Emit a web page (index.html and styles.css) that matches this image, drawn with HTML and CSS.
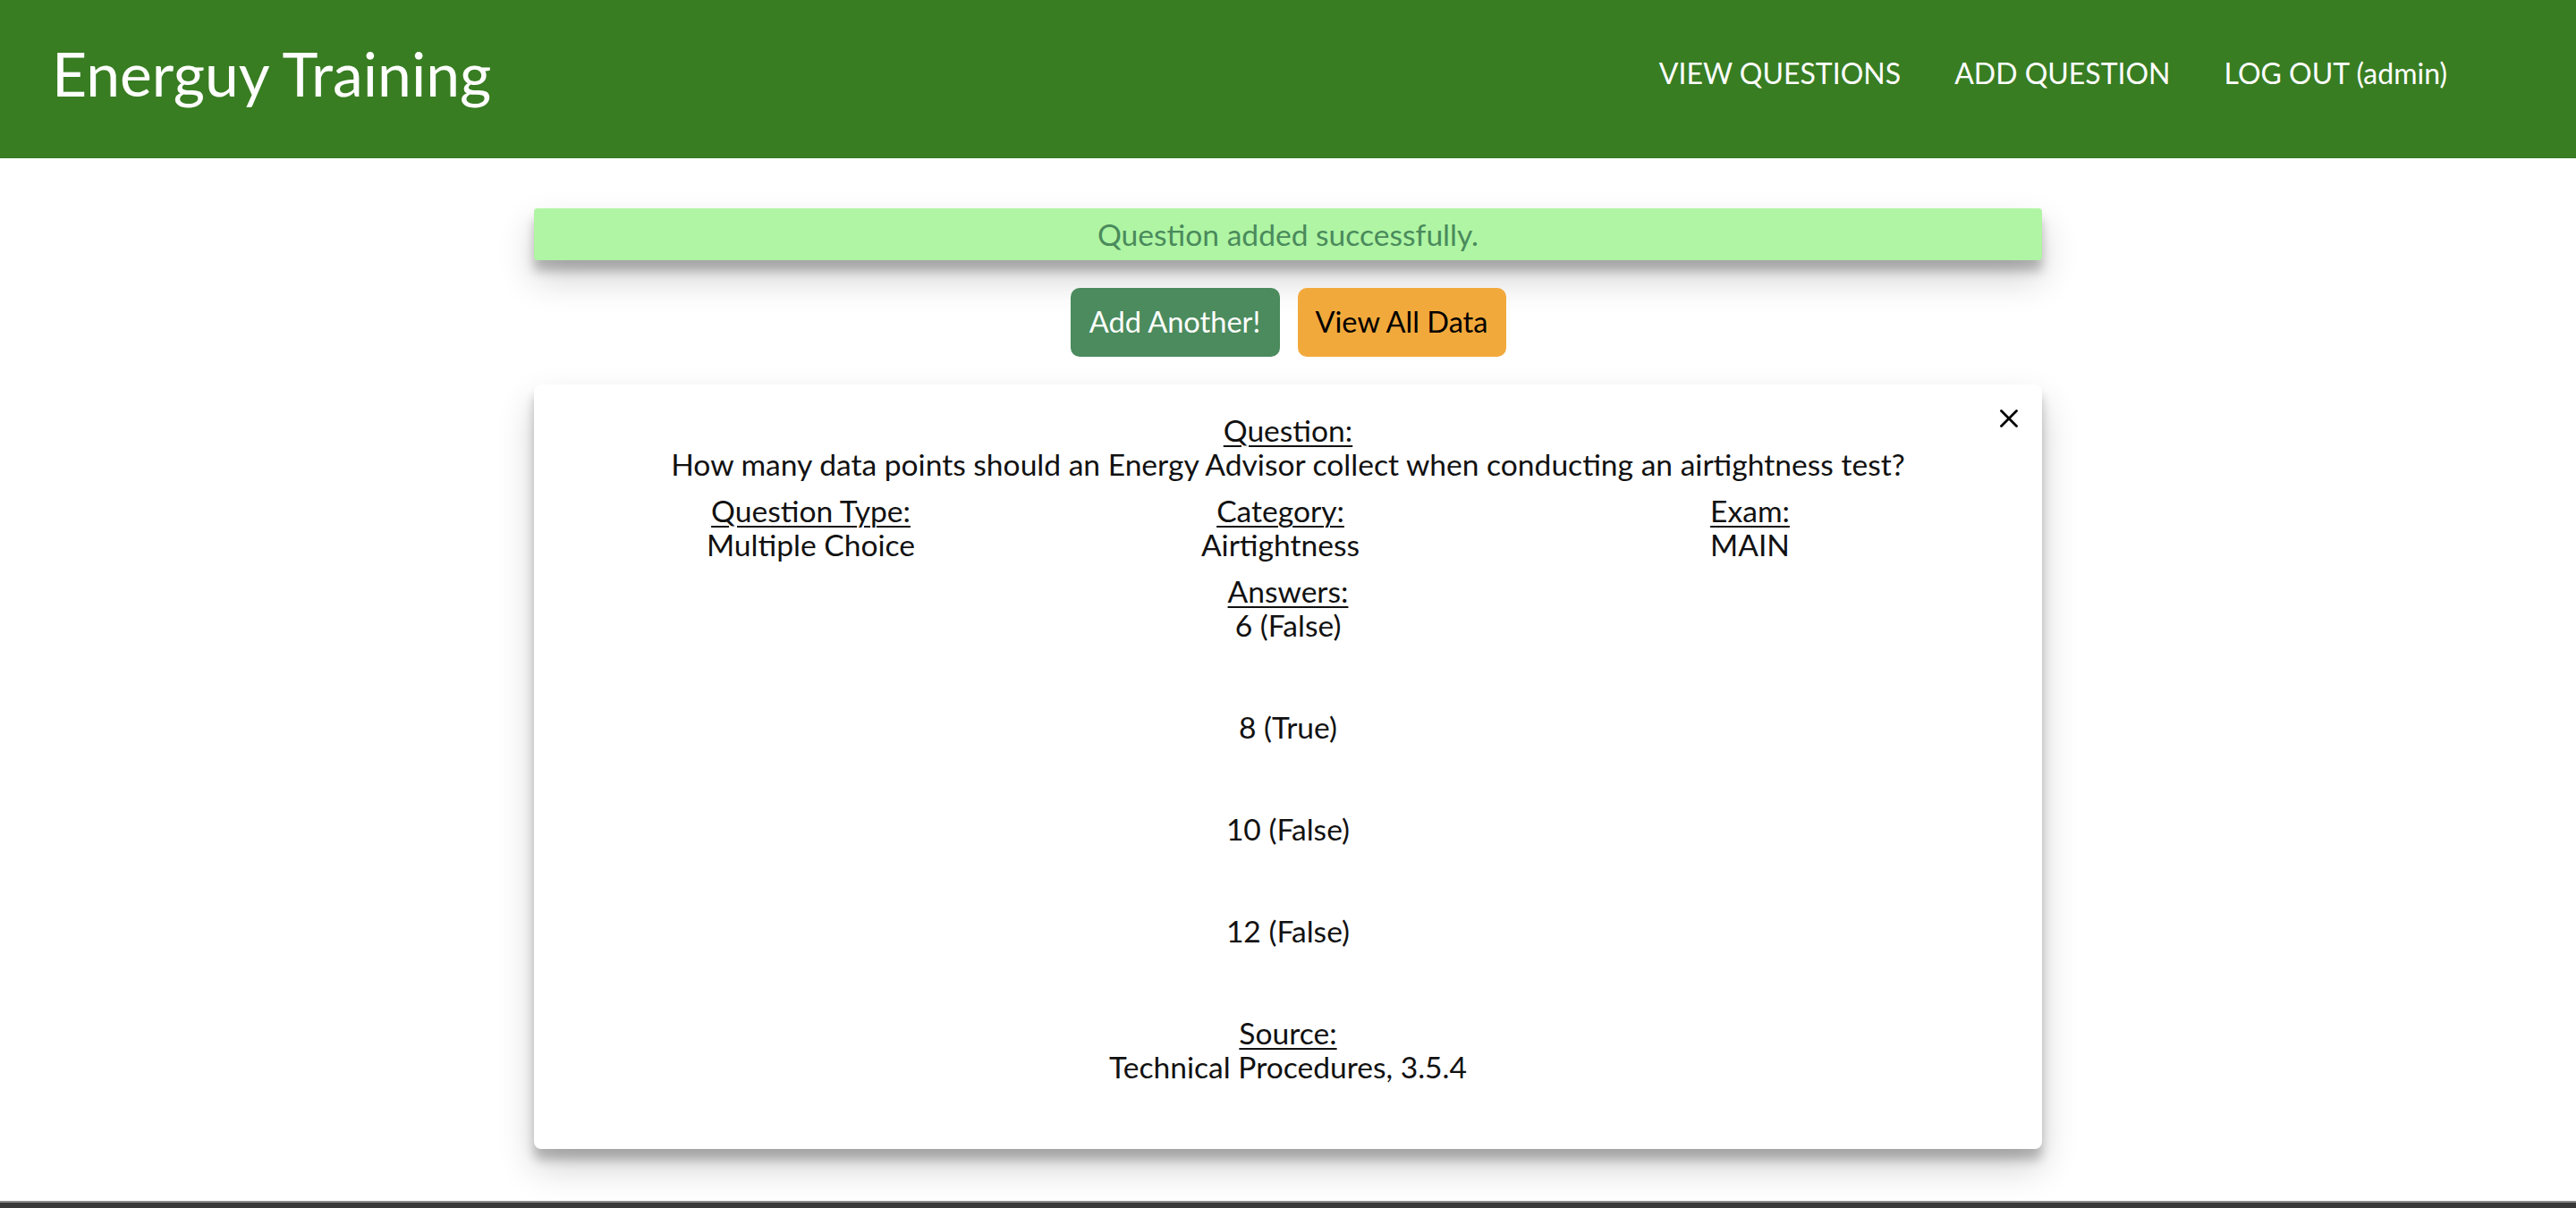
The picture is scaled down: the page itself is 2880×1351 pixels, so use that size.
FILE: index.html
```html
<!DOCTYPE html>
<html lang="en">
<head>
<meta charset="utf-8">
<title>Energuy Training</title>
<link rel="stylesheet" href="styles.css">
</head>
<body>
<header class="topbar">
  <a class="brand" href="#">Energuy Training</a>
  <nav class="nav">
    <a class="nav-link" href="#">VIEW QUESTIONS</a>
    <a class="nav-link" href="#">ADD QUESTION</a>
    <a class="nav-link" href="#">LOG OUT (admin)</a>
  </nav>
</header>

<main class="main">
  <div class="alert">Question added successfully.</div>

  <div class="actions">
    <a class="btn btn-green" href="#">Add Another!</a>
    <a class="btn btn-orange" href="#">View All Data</a>
  </div>

  <section class="card">
    <button class="close" type="button" aria-label="Close">
      <svg viewBox="0 0 20 20" width="20" height="20"><path d="M1.5 1.5 L18.5 18.5 M18.5 1.5 L1.5 18.5" stroke="#000" stroke-width="2.8" fill="none" stroke-linecap="round"/></svg>
    </button>

    <div class="block">
      <div class="label">Question:</div>
      <div>How many data points should an Energy Advisor collect when conducting an airtightness test?</div>
    </div>

    <div class="cols">
      <div class="col">
        <div class="label">Question Type:</div>
        <div>Multiple Choice</div>
      </div>
      <div class="col">
        <div class="label">Category:</div>
        <div>Airtightness</div>
      </div>
      <div class="col">
        <div class="label">Exam:</div>
        <div>MAIN</div>
      </div>
    </div>

    <div class="block">
      <div class="label">Answers:</div>
      <div class="answer">6 (False)</div>
      <div class="answer">8 (True)</div>
      <div class="answer">10 (False)</div>
      <div class="answer">12 (False)</div>
      <div class="label">Source:</div>
      <div>Technical Procedures, 3.5.4</div>
    </div>
  </section>
</main>

<footer class="footer"></footer>
</body>
</html>
```
FILE: styles.css
```css
html, body {
  margin: 0;
  padding: 0;
  background: #ffffff;
}

body {
  font-family: "Lato", "Open Sans", sans-serif;
  color: #111111;
  font-size: 33.6px;
  line-height: 38.4px;
}

.topbar {
  height: 177px;
  background: #387d22;
  display: flex;
  align-items: center;
  justify-content: space-between;
  padding: 0 144px 0 58px;
  box-sizing: border-box;
}

.brand {
  color: #ffffff;
  text-decoration: none;
  font-size: 67.8px;
  line-height: 80px;
  margin-top: -14px;
}

.nav {
  display: flex;
  gap: 60px;
  margin-top: -14px;
}

.nav-link {
  color: #ffffff;
  text-decoration: none;
  font-size: 32px;
  line-height: 38px;
}

.main {
  width: 1686px;
  margin: 56px auto 0;
  display: flex;
  flex-direction: column;
  align-items: stretch;
}

.alert {
  height: 58px;
  background: #aff5a3;
  color: #4a8a5c;
  border-radius: 4px;
  display: flex;
  align-items: center;
  justify-content: center;
  box-shadow: 0 20px 40px rgba(0, 0, 0, 0.19), 0 12px 12px rgba(0, 0, 0, 0.23);
}

.actions {
  display: flex;
  justify-content: center;
  gap: 20px;
  margin-top: 31px;
}

.btn {
  height: 77px;
  width: 234px;
  box-sizing: border-box;
  border-radius: 10px;
  display: flex;
  align-items: center;
  justify-content: center;
  text-decoration: none;
  font-size: 32.6px;
}

.btn-green {
  background: #4b8b5d;
  color: #ffffff;
}

.btn-orange {
  background: #f2a93b;
  color: #000000;
  width: 233px;
}

.card {
  position: relative;
  margin-top: 31px;
  background: #ffffff;
  border-radius: 8px;
  padding: 32px 0 72px;
  text-align: center;
  box-shadow: 0 20px 40px rgba(0, 0, 0, 0.19), 0 12px 12px rgba(0, 0, 0, 0.23);
}

.close {
  position: absolute;
  top: 28px;
  right: 27px;
  width: 20px;
  height: 20px;
  padding: 0;
  border: 0;
  background: none;
  display: block;
}

.close svg {
  display: block;
}

.label {
  text-decoration: underline;
  text-underline-offset: 4px;
  text-decoration-thickness: 2px;
}

.cols {
  display: grid;
  grid-template-columns: repeat(3, 1fr);
  padding: 0 64px 0 47px;
  margin: 13px 0;
}

.answer {
  margin-bottom: 75.6px;
}

.footer {
  margin-top: 58px;
  height: 100px;
  background: #383838;
  border-top: 2px solid #8c8c8c;
}
```
